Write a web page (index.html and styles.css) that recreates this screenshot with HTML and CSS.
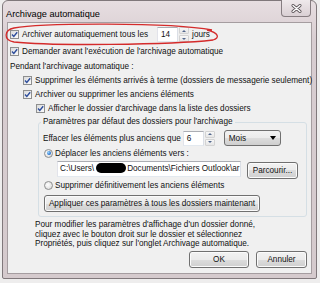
FILE: index.html
```html
<!DOCTYPE html>
<html lang="fr">
<head>
    <meta charset="UTF-8">
    <meta name="viewport" content="width=device-width, initial-scale=1.0">
    <title>Archivage automatique</title>
    <link rel="stylesheet" href="styles.css">
</head>
<body>
    <div class="window">
        <!-- Barre de titre -->
        <div class="titlebar">
            <span class="title">Archivage automatique</span>
            <span class="close">
                <svg width="11" height="9" viewBox="0 0 11 9">
                    <path d="M2 1.5 L9 7.5 M9 1.5 L2 7.5" stroke="#5d5559" stroke-width="3" stroke-linecap="round"/>
                    <path d="M2 1.5 L9 7.5 M9 1.5 L2 7.5" stroke="#ffffff" stroke-width="1.4" stroke-linecap="round"/>
                </svg>
            </span>
        </div>

        <div class="client">
            <div class="row row-main">
                <span class="check"><svg viewBox="0 0 7 7"><path d="M1 3.5 L2.8 5.4 L6.2 1.2"/></svg></span>
                <span>Archiver automatiquement tous les</span>
                <span class="spin spin-days">
                    <span class="spin-val">14</span>
                    <span class="spin-btns"><i class="up"></i><i class="down"></i></span>
                </span>
                <span class="unit">jours</span>
            </div>
            <div class="row row-ask">
                <span class="check"><svg viewBox="0 0 7 7"><path d="M1 3.5 L2.8 5.4 L6.2 1.2"/></svg></span>
                <span>Demander avant l'exécution de l'archivage automatique</span>
            </div>
            <div class="row">
                <span>Pendant l'archivage automatique :</span>
            </div>
            <div class="row indent-1">
                <span class="check"><svg viewBox="0 0 7 7"><path d="M1 3.5 L2.8 5.4 L6.2 1.2"/></svg></span>
                <span>Supprimer les éléments arrivés à terme (dossiers de messagerie seulement)</span>
            </div>
            <div class="row indent-1">
                <span class="check"><svg viewBox="0 0 7 7"><path d="M1 3.5 L2.8 5.4 L6.2 1.2"/></svg></span>
                <span>Archiver ou supprimer les anciens éléments</span>
            </div>
            <div class="row indent-2">
                <span class="check"><svg viewBox="0 0 7 7"><path d="M1 3.5 L2.8 5.4 L6.2 1.2"/></svg></span>
                <span>Afficher le dossier d'archivage dans la liste des dossiers</span>
            </div>

            <!-- Groupe des paramètres par défaut -->
            <div class="group">
                <span class="group-title">Paramètres par défaut des dossiers pour l'archivage</span>
                <div class="row row-age">
                    <span>Effacer les éléments plus anciens que</span>
                    <span class="spin spin-age">
                        <span class="spin-val">6</span>
                        <span class="spin-btns"><i class="up"></i><i class="down"></i></span>
                    </span>
                    <span class="combo">Mois</span>
                </div>
                <div class="row">
                    <span class="radio on"></span>
                    <span>Déplacer les anciens éléments vers :</span>
                </div>
                <div class="row row-path">
                    <span class="path-field">C:\Users\<span class="blob"></span>Documents\Fichiers Outlook\ar</span>
                    <span class="btn btn-browse">Parcourir...</span>
                </div>
                <div class="row row-delete">
                    <span class="radio"></span>
                    <span>Supprimer définitivement les anciens éléments</span>
                </div>
                <span class="btn btn-apply">Appliquer ces paramètres à tous les dossiers maintenant</span>
            </div>

            <p class="note">Pour modifier les paramètres d'affichage d'un dossier donné,<br>cliquez avec le bouton droit sur le dossier et sélectionnez<br>Propriétés, puis cliquez sur l'onglet Archivage automatique.</p>

            <div class="actions">
                <span class="btn btn-ok">OK</span>
                <span class="btn btn-cancel">Annuler</span>
            </div>
        </div>
    </div>

    <!-- Annotation rouge autour de la première option -->
    <svg class="circle-mark" width="320" height="60" viewBox="0 0 320 60">
        <path d="M212 30 C170 22, 40 23, 14 28 C4 30, 3 40, 14 42 C50 46, 170 45, 213 40 C220 38, 219 33, 207 30" fill="none" stroke="#d42b2b" stroke-width="1.3"/>
    </svg>
</body>
</html>
```

FILE: styles.css
```css
/* Fenêtre style Windows 7 */
body {
    margin: 0;
    width: 320px;
    height: 283px;
    overflow: hidden;
    position: relative;
    background-color: #eeeded;
    font-family: "Liberation Sans", Arial, sans-serif;
    font-size: 8.2px;
    color: #111;
}

.window {
    box-sizing: border-box;
    width: 315px;
    height: 279px;
    margin-left: 2px;
    padding: 0 4px 4px 4px;
    border: 1px solid #80787b;
    border-radius: 6px 6px 2px 2px;
    background: linear-gradient(#e7dee1, #d8cdd1 40px, #d5cacd);
    display: flex;
    flex-direction: column;
}

.titlebar {
    height: 21px;
    flex-shrink: 0;
    display: flex;
    justify-content: space-between;
}

.title {
    margin-left: -1px;
    padding-top: 8px;
    line-height: 10px;
    font-size: 9.2px;
    color: #000;
}

.close {
    box-sizing: border-box;
    width: 30px;
    height: 17px;
    margin: -1px 1px 0 0;
    border: 1px solid #867d81;
    border-top: none;
    border-radius: 0 0 4px 4px;
    background: linear-gradient(#efe9eb, #dad0d4);
    display: flex;
    justify-content: center;
    align-items: center;
}

.client {
    flex: 1;
    background-color: #f0f0f0;
    border: 1px solid #a59da0;
    padding: 3px 0 0 2px;
    display: flex;
    flex-direction: column;
}

.row {
    display: flex;
    align-items: center;
    height: 14px;
    white-space: nowrap;
    flex-shrink: 0;
}

.row-main {
    height: 17px;
}

.row-ask {
    height: 16px;
}

.indent-1 {
    padding-left: 13px;
}

.indent-2 {
    padding-left: 26px;
}

/* Cases à cocher et boutons radio */
.check {
    box-sizing: border-box;
    width: 9px;
    height: 9px;
    margin-right: 3px;
    border: 1px solid #8e8f8f;
    background: linear-gradient(135deg, #d9dadb, #fbfbfb);
    display: flex;
    justify-content: center;
    align-items: center;
    flex-shrink: 0;
}

.check svg {
    width: 7px;
    height: 7px;
}

.check path {
    fill: none;
    stroke: #2d4d9c;
    stroke-width: 1.4;
}

.radio {
    box-sizing: border-box;
    width: 9px;
    height: 9px;
    margin: 0 2px 0 1px;
    border: 1px solid #8e8f8f;
    border-radius: 50%;
    background: radial-gradient(circle at 40% 40%, #ffffff, #d4d4d4);
    display: flex;
    justify-content: center;
    align-items: center;
    flex-shrink: 0;
}

.radio.on::after {
    content: "";
    width: 4px;
    height: 4px;
    border-radius: 50%;
    background: radial-gradient(circle at 35% 35%, #9ad6ff, #1a64c4 75%);
}

/* Champs numériques */
.spin {
    display: flex;
    align-items: center;
}

.spin-days {
    margin-left: 9px;
}

.spin-age {
    margin-left: 2px;
}

.spin-val {
    box-sizing: border-box;
    height: 15px;
    width: 21px;
    padding-left: 3px;
    line-height: 13px;
    background-color: #fff;
    border: 1px solid #abadb3;
    border-color: #abadb3 #dbdfe6 #e3e9ef #e2e3ea;
}

.spin-btns {
    display: flex;
    flex-direction: column;
    gap: 1px;
    margin-left: 1px;
}

.spin-btns i {
    box-sizing: border-box;
    width: 10px;
    height: 7px;
    border: 1px solid #d3d3d3;
    border-radius: 1px;
    background: linear-gradient(#f7f7f7, #e6e6e6);
    display: flex;
    justify-content: center;
    align-items: center;
}

.spin-btns .up::after {
    content: "";
    border-left: 2px solid transparent;
    border-right: 2px solid transparent;
    border-bottom: 2px solid #52678c;
}

.spin-btns .down::after {
    content: "";
    border-left: 2px solid transparent;
    border-right: 2px solid transparent;
    border-top: 2px solid #52678c;
}

.unit {
    margin-left: 3px;
}

.combo {
    box-sizing: border-box;
    width: 57px;
    height: 16px;
    margin-left: 9px;
    padding: 0 4px 0 4px;
    border: 1px solid #707070;
    border-radius: 3px;
    background: linear-gradient(#f2f2f2 0%, #ebebeb 50%, #dddddd 50%, #cfcfcf 100%);
    display: flex;
    align-items: center;
    justify-content: space-between;
}

.combo::after {
    content: "";
    border-left: 3.5px solid transparent;
    border-right: 3.5px solid transparent;
    border-top: 4px solid #000;
}

/* Groupe */
.group {
    margin: 7px 4px 0 28px;
    padding: 0 4px 4px 4px;
    border: 1px solid #d5dfe5;
    border-radius: 3px;
    display: flex;
    flex-direction: column;
    flex-shrink: 0;
}

.group-title {
    align-self: flex-start;
    margin: -8px 0 0 -2px;
    padding: 0 2px;
    line-height: 14px;
    background-color: #f0f0f0;
}

.row-age {
    height: 16px;
    margin-top: 1px;
}

.row-path {
    height: 18px;
    align-items: flex-start;
}

.path-field {
    box-sizing: border-box;
    width: 184px;
    height: 16px;
    margin: 1px 0 0 14px;
    padding-left: 2px;
    line-height: 14px;
    overflow: hidden;
    background-color: #fff;
    border: 1px solid #abadb3;
    border-color: #abadb3 #dbdfe6 #e3e9ef #e2e3ea;
}

.blob {
    display: inline-block;
    width: 30px;
    height: 10px;
    margin: 0 1px 0 2px;
    vertical-align: -2px;
    background-color: #000;
    border-radius: 5px;
}

.row-delete {
    height: 15px;
}

/* Boutons */
.btn {
    box-sizing: border-box;
    height: 17px;
    border: 1px solid #707070;
    border-radius: 3px;
    background: linear-gradient(#f2f2f2 0%, #ebebeb 50%, #dddddd 50%, #cfcfcf 100%);
    box-shadow: inset 0 0 0 1px #fbfbfb;
    display: flex;
    justify-content: center;
    align-items: center;
    white-space: nowrap;
    flex-shrink: 0;
}

.btn-browse {
    width: 51px;
    margin: 2px 0 0 6px;
}

.btn-apply {
    width: 216px;
    margin: 2px 0 0 1px;
}

.note {
    margin: 3px 0 0 25px;
    line-height: 9.5px;
}

.actions {
    display: flex;
    justify-content: flex-end;
    gap: 7px;
    margin: 2px 4px 0 0;
}

.btn-ok {
    width: 60px;
}

.btn-cancel {
    width: 51px;
}

.circle-mark {
    position: absolute;
    top: 0;
    left: 0;
    pointer-events: none;
}
```
